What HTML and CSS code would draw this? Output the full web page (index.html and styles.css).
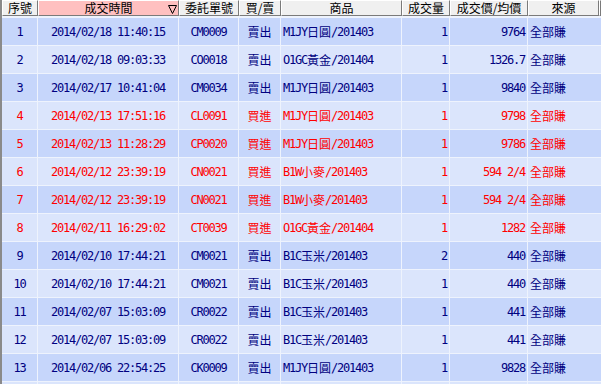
FILE: index.html
```html
<!DOCTYPE html>
<html lang="zh-Hant">
<head>
<meta charset="utf-8">
<link rel="stylesheet" href="styles.css">
</head>
<body>
<div class="grid">
  <div class="head">
    <div class="hc">序號</div>
    <div class="hc sorted">成交時間<svg class="sort" width="9" height="9" viewBox="0 0 9 9"><path d="M0.5 0.5 H8.5 L4.5 8.5 Z" fill="none" stroke="#000" stroke-width="1"/></svg></div>
    <div class="hc">委託單號</div>
    <div class="hc">買/賣</div>
    <div class="hc">商品</div>
    <div class="hc">成交量</div>
    <div class="hc">成交價/均價</div>
    <div class="hc">來源</div>
    <div class="hc"></div>
  </div>
  <div class="body">
    <div class="row odd sell"><div class="c m">1</div><div class="c m">2014/02/18 11:40:15</div><div class="c m">CM0009</div><div class="c m cj">賣出</div><div class="c l">M1JY<span class="cj">日圓</span>/201403</div><div class="c r">1</div><div class="c r">9764</div><div class="c l cj">全部賺</div></div>
    <div class="row even sell"><div class="c m">2</div><div class="c m">2014/02/18 09:03:33</div><div class="c m">CO0018</div><div class="c m cj">賣出</div><div class="c l">O1GC<span class="cj">黃金</span>/201404</div><div class="c r">1</div><div class="c r">1326.7</div><div class="c l cj">全部賺</div></div>
    <div class="row odd sell"><div class="c m">3</div><div class="c m">2014/02/17 10:41:04</div><div class="c m">CM0034</div><div class="c m cj">賣出</div><div class="c l">M1JY<span class="cj">日圓</span>/201403</div><div class="c r">1</div><div class="c r">9840</div><div class="c l cj">全部賺</div></div>
    <div class="row even buy"><div class="c m">4</div><div class="c m">2014/02/13 17:51:16</div><div class="c m">CL0091</div><div class="c m cj">買進</div><div class="c l">M1JY<span class="cj">日圓</span>/201403</div><div class="c r">1</div><div class="c r">9798</div><div class="c l cj">全部賺</div></div>
    <div class="row odd buy"><div class="c m">5</div><div class="c m">2014/02/13 11:28:29</div><div class="c m">CP0020</div><div class="c m cj">買進</div><div class="c l">M1JY<span class="cj">日圓</span>/201403</div><div class="c r">1</div><div class="c r">9786</div><div class="c l cj">全部賺</div></div>
    <div class="row even buy"><div class="c m">6</div><div class="c m">2014/02/12 23:39:19</div><div class="c m">CN0021</div><div class="c m cj">買進</div><div class="c l">B1W<span class="cj">小麥</span>/201403</div><div class="c r">1</div><div class="c r">594 2/4</div><div class="c l cj">全部賺</div></div>
    <div class="row odd buy"><div class="c m">7</div><div class="c m">2014/02/12 23:39:19</div><div class="c m">CN0021</div><div class="c m cj">買進</div><div class="c l">B1W<span class="cj">小麥</span>/201403</div><div class="c r">1</div><div class="c r">594 2/4</div><div class="c l cj">全部賺</div></div>
    <div class="row even buy"><div class="c m">8</div><div class="c m">2014/02/11 16:29:02</div><div class="c m">CT0039</div><div class="c m cj">買進</div><div class="c l">O1GC<span class="cj">黃金</span>/201404</div><div class="c r">1</div><div class="c r">1282</div><div class="c l cj">全部賺</div></div>
    <div class="row odd sell"><div class="c m">9</div><div class="c m">2014/02/10 17:44:21</div><div class="c m">CM0021</div><div class="c m cj">賣出</div><div class="c l">B1C<span class="cj">玉米</span>/201403</div><div class="c r">2</div><div class="c r">440</div><div class="c l cj">全部賺</div></div>
    <div class="row even sell"><div class="c m">10</div><div class="c m">2014/02/10 17:44:21</div><div class="c m">CM0021</div><div class="c m cj">賣出</div><div class="c l">B1C<span class="cj">玉米</span>/201403</div><div class="c r">1</div><div class="c r">440</div><div class="c l cj">全部賺</div></div>
    <div class="row odd sell"><div class="c m">11</div><div class="c m">2014/02/07 15:03:09</div><div class="c m">CR0022</div><div class="c m cj">賣出</div><div class="c l">B1C<span class="cj">玉米</span>/201403</div><div class="c r">1</div><div class="c r">441</div><div class="c l cj">全部賺</div></div>
    <div class="row even sell"><div class="c m">12</div><div class="c m">2014/02/07 15:03:09</div><div class="c m">CR0022</div><div class="c m cj">賣出</div><div class="c l">B1C<span class="cj">玉米</span>/201403</div><div class="c r">1</div><div class="c r">441</div><div class="c l cj">全部賺</div></div>
    <div class="row odd sell"><div class="c m">13</div><div class="c m">2014/02/06 22:54:25</div><div class="c m">CK0009</div><div class="c m cj">賣出</div><div class="c l">M1JY<span class="cj">日圓</span>/201403</div><div class="c r">1</div><div class="c r">9828</div><div class="c l cj">全部賺</div></div>
    <div class="row even sell"><div class="c"></div><div class="c"></div><div class="c"></div><div class="c"></div><div class="c"></div><div class="c"></div><div class="c"></div><div class="c"></div></div>
  </div>
</div>
</body>
</html>
```

FILE: styles.css
```css
html, body {
  margin: 0;
  padding: 0;
  background: #eef3fd;
  overflow: hidden;
}
.grid {
  width: 599px;
  height: 384px;
  border-left: 2px solid #8a8a8a;
  overflow: hidden;
}
.head {
  display: grid;
  grid-template-columns: 36px 141px 60px 42px 121px 48px 78px 71px 1fr;
  height: 16px;
  background: #f0f0f0;
}
.hc {
  position: relative;
  box-sizing: border-box;
  height: 16px;
  border-top: 1px solid #ffffff;
  border-left: 1px solid #ffffff;
  border-right: 1px solid #7a7a7a;
  border-bottom: 1px solid #7a7a7a;
  background: #f0f0f0;
  font: 12px/14px "Noto Sans CJK TC", sans-serif;
  color: #000;
  text-align: center;
  white-space: nowrap;
  overflow: hidden;
}
.hc.sorted {
  background: #ffc0c0;
}
.sort {
  position: absolute;
  right: 1px;
  top: 4px;
}
.body {
  display: flex;
  flex-direction: column;
  gap: 1px;
  padding-top: 2px;
  background: #eef3fd;
}
.row {
  display: grid;
  grid-template-columns: 35px 140px 59px 41px 120px 47px 77px 73px;
  column-gap: 1px;
  height: 27px;
  flex: none;
}
.row.odd .c { background: #c6d6fb; }
.row.even .c { background: #dbe5fc; }
.row.sell { color: #000080; }
.row.buy { color: #ff0000; }
.c {
  display: flex;
  align-items: center;
  font: 12px/14px "DejaVu Sans Mono", "Liberation Mono", "Noto Sans CJK TC", monospace;
  letter-spacing: -1.22px;
  white-space: nowrap;
  overflow: hidden;
}
.cj {
  font-family: "Noto Sans CJK TC", sans-serif;
  letter-spacing: 0;
}
.m { justify-content: center; }
.l { justify-content: flex-start; padding-left: 2px; }
.r { justify-content: flex-end; padding-right: 2px; }
```
